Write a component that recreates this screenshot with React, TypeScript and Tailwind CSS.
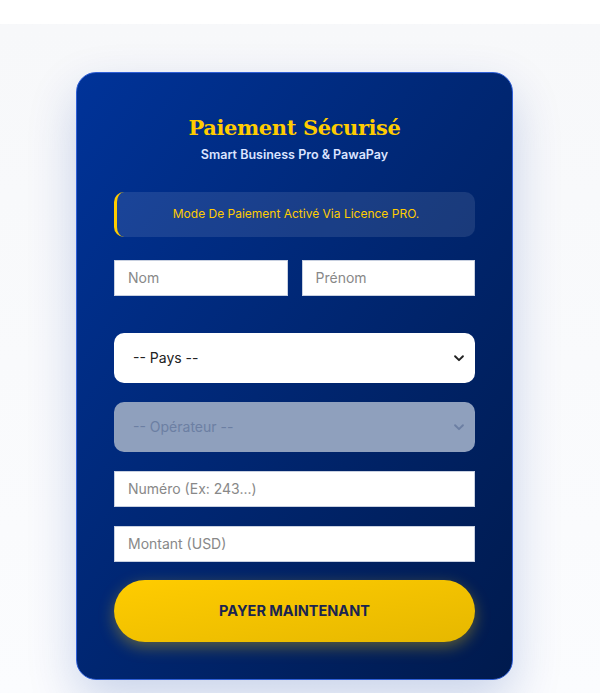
import React from "react";

function Chevron({ className }: { className: string }) {
  return (
    <svg viewBox="0 0 16 16" className={className} fill="none" stroke="currentColor" strokeWidth="2.2" strokeLinecap="round" strokeLinejoin="round">
      <path d="M3.5 6l4.5 4.5L12.5 6" />
    </svg>
  );
}

export default function App() {
  return (
    <div className="min-h-[693px] bg-white font-['Inter',sans-serif]">
      <div className="h-6 bg-white" />
      <div className="bg-gradient-to-b from-[#f7f8fa] to-[#fbfcfe] pt-12 pb-3 min-h-[669px]">
        <div className="ml-[76px] w-[437px] rounded-[20px] border border-[#2f5fd6] bg-gradient-to-br from-[#003399] to-[#001a4d] px-[37px] pt-[40px] pb-[37px] shadow-[0_20px_50px_rgba(0,51,153,0.2)]">
          <div className="text-center">
            <h1 className="font-['DejaVu_Serif',serif] text-[21px] font-bold leading-[30px] tracking-[-0.4px] text-[#ffcc00]">
              Paiement Sécurisé
            </h1>
            <p className="mt-[3px] text-[12.5px] font-semibold text-[#dbe4ff]">Smart Business Pro &amp; PawaPay</p>
          </div>

          <div className="mt-[27px] flex h-[45px] items-center justify-center rounded-[10px] border-l-[3px] border-[#ffcc00] bg-white/10 text-[12px] text-[#ffcc00]">
            Mode De Paiement Activé Via Licence PRO.
          </div>

          <div className="mt-[23px] flex gap-[14px]">
            <input placeholder="Nom" className="h-9 w-full border border-[#c8d0e0] bg-white px-[13px] text-[14px] text-[#333] outline-none placeholder:text-[#888]" />
            <input placeholder="Prénom" className="h-9 w-full border border-[#c8d0e0] bg-white px-[13px] text-[14px] text-[#333] outline-none placeholder:text-[#888]" />
          </div>

          <div className="mt-[37px] flex h-[50px] items-center justify-between rounded-[10px] bg-white pl-[19px] pr-[9px] text-[14px] text-[#222]">
            <span>-- Pays --</span>
            <Chevron className="h-[14px] w-[14px] text-[#222]" />
          </div>

          <div className="mt-[19px] flex h-[50px] items-center justify-between rounded-[10px] bg-[#8fa0bd] pl-[19px] pr-[9px] text-[14px] text-[#6c7fa3]">
            <span>-- Opérateur --</span>
            <Chevron className="h-[14px] w-[14px] text-[#6c7fa3]" />
          </div>

          <input placeholder="Numéro (Ex: 243...)" className="mt-[19px] block h-9 w-full border border-[#c8d0e0] bg-white px-[13px] text-[14px] outline-none placeholder:text-[#888]" />
          <input placeholder="Montant (USD)" className="mt-[19px] block h-9 w-full border border-[#c8d0e0] bg-white px-[13px] text-[14px] outline-none placeholder:text-[#888]" />

          <button className="mt-[18px] flex h-[62px] w-full items-center justify-center rounded-full bg-gradient-to-br from-[#ffcc00] to-[#e6b800] text-[14.5px] font-bold text-[#1a2550] shadow-[0_5px_15px_rgba(255,204,0,0.35)]">
            PAYER MAINTENANT
          </button>
        </div>
      </div>
    </div>
  );
}
